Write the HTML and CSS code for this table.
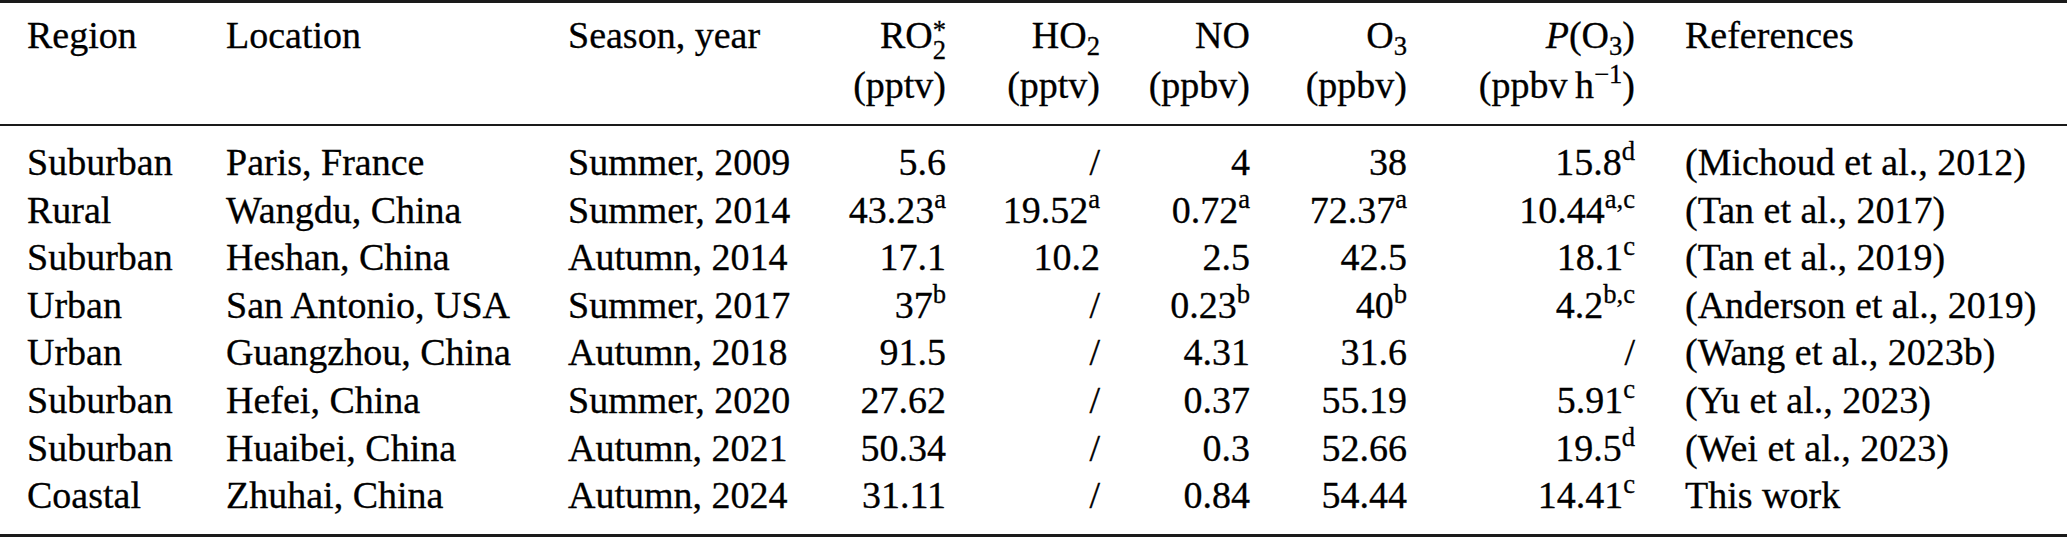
FILE: index.html
```html
<!DOCTYPE html>
<html lang="en">
<head>
<meta charset="utf-8">
<title>Table</title>
<link rel="stylesheet" href="styles.css">
</head>
<body>
<div class="tbl">
  <div class="rule rule-top"></div>
  <div class="grid head">
    <div class="c">Region</div>
    <div class="c">Location</div>
    <div class="c">Season, year</div>
    <div class="c r">RO<span class="ss"><span class="ss-top">*</span><span class="ss-bot">2</span></span><br>(pptv)</div>
    <div class="c r">HO<sub>2</sub><br>(pptv)</div>
    <div class="c r">NO<br>(ppbv)</div>
    <div class="c r">O<sub>3</sub><br>(ppbv)</div>
    <div class="c r"><i>P</i>(O<sub>3</sub>)<br>(ppbv&thinsp;h<sup>−1</sup>)</div>
    <div class="c ref">References</div>
  </div>
  <div class="rule rule-mid"></div>
  <div class="grid body">
    <div class="c">Suburban</div><div class="c">Paris, France</div><div class="c">Summer, 2009</div><div class="c r">5.6</div><div class="c r">/</div><div class="c r">4</div><div class="c r">38</div><div class="c r">15.8<sup>d</sup></div><div class="c ref">(Michoud et al., 2012)</div>
    <div class="c">Rural</div><div class="c">Wangdu, China</div><div class="c">Summer, 2014</div><div class="c r">43.23<sup>a</sup></div><div class="c r">19.52<sup>a</sup></div><div class="c r">0.72<sup>a</sup></div><div class="c r">72.37<sup>a</sup></div><div class="c r">10.44<sup>a,c</sup></div><div class="c ref">(Tan et al., 2017)</div>
    <div class="c">Suburban</div><div class="c">Heshan, China</div><div class="c">Autumn, 2014</div><div class="c r">17.1</div><div class="c r">10.2</div><div class="c r">2.5</div><div class="c r">42.5</div><div class="c r">18.1<sup>c</sup></div><div class="c ref">(Tan et al., 2019)</div>
    <div class="c">Urban</div><div class="c">San Antonio, USA</div><div class="c">Summer, 2017</div><div class="c r">37<sup>b</sup></div><div class="c r">/</div><div class="c r">0.23<sup>b</sup></div><div class="c r">40<sup>b</sup></div><div class="c r">4.2<sup>b,c</sup></div><div class="c ref">(Anderson et al., 2019)</div>
    <div class="c">Urban</div><div class="c">Guangzhou, China</div><div class="c">Autumn, 2018</div><div class="c r">91.5</div><div class="c r">/</div><div class="c r">4.31</div><div class="c r">31.6</div><div class="c r">/</div><div class="c ref">(Wang et al., 2023b)</div>
    <div class="c">Suburban</div><div class="c">Hefei, China</div><div class="c">Summer, 2020</div><div class="c r">27.62</div><div class="c r">/</div><div class="c r">0.37</div><div class="c r">55.19</div><div class="c r">5.91<sup>c</sup></div><div class="c ref">(Yu et al., 2023)</div>
    <div class="c">Suburban</div><div class="c">Huaibei, China</div><div class="c">Autumn, 2021</div><div class="c r">50.34</div><div class="c r">/</div><div class="c r">0.3</div><div class="c r">52.66</div><div class="c r">19.5<sup>d</sup></div><div class="c ref">(Wei et al., 2023)</div>
    <div class="c">Coastal</div><div class="c">Zhuhai, China</div><div class="c">Autumn, 2024</div><div class="c r">31.11</div><div class="c r">/</div><div class="c r">0.84</div><div class="c r">54.44</div><div class="c r">14.41<sup>c</sup></div><div class="c ref">This work</div>
  </div>
  <div class="rule rule-bottom"></div>
</div>
</body>
</html>
```

FILE: styles.css
```css
html, body {
  margin: 0;
  padding: 0;
  background: #ffffff;
}
body {
  width: 2067px;
  height: 540px;
  overflow: hidden;
  font-family: "Liberation Serif", "Tinos", "Times New Roman", "Nimbus Roman", "DejaVu Serif", serif;
  font-size: 38px;
  color: #000;
  -webkit-text-stroke: 0.3px #000;
}
.tbl {
  width: 2067px;
}
.rule {
  background: #1a1a1a;
}
.rule-top {
  height: 3px;
}
.rule-mid {
  height: 2px;
}
.rule-bottom {
  height: 3px;
}
.grid {
  display: grid;
  grid-template-columns: 199px 342px 232px 146px 154px 150px 157px 228px 1fr;
  padding-left: 27px;
}
.head {
  line-height: 50px;
  padding-top: 7px;
  padding-bottom: 14px;
}
.body {
  line-height: 47.6px;
  padding-top: 13px;
  padding-bottom: 14px;
}
.c {
  white-space: nowrap;
  text-align: left;
}
.r {
  text-align: right;
}
.ref {
  padding-left: 50px;
}
sup, sub {
  font-size: 0.7em;
  line-height: 0;
}
sup {
  vertical-align: 0.55em;
}
sub {
  vertical-align: -0.25em;
}
.ss {
  display: inline-flex;
  flex-direction: column;
  align-items: flex-start;
  font-size: 0.7em;
  line-height: 20px;
  vertical-align: 0.34em;
}
.ss-top,
.ss-bot {
  display: block;
}
i {
  font-style: italic;
}
```
